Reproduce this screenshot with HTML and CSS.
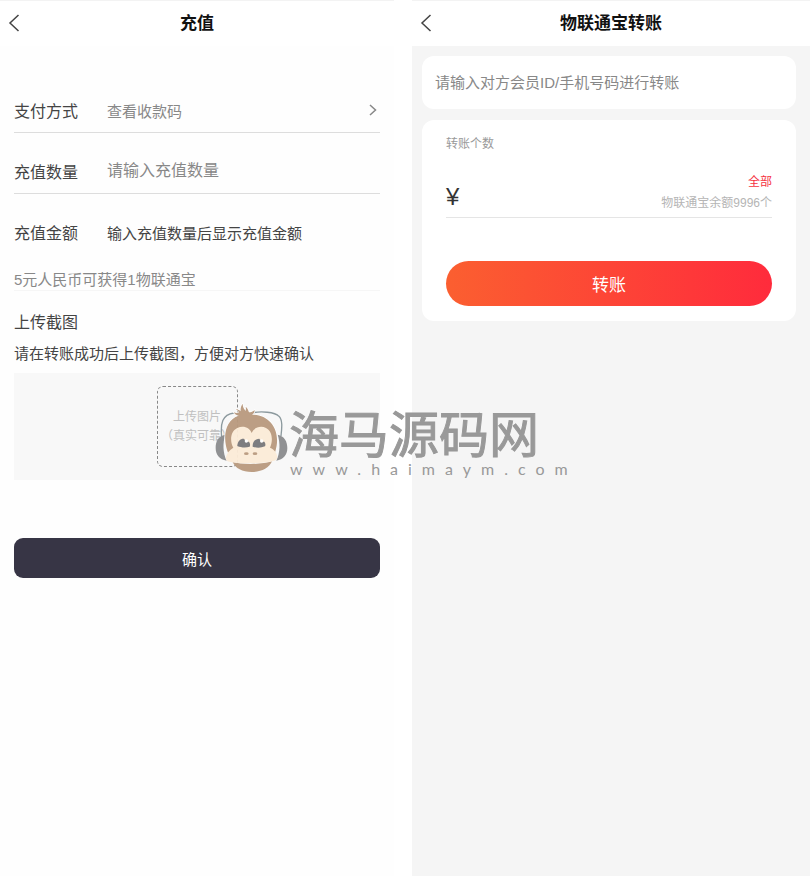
FILE: index.html
```html
<!DOCTYPE html>
<html lang="zh-CN">
<head>
<meta charset="utf-8">
<meta name="viewport" content="width=device-width, initial-scale=1">
<title>充值 / 物联通宝转账</title>
<link rel="stylesheet" href="styles.css">
</head>
<body>
<div class="screens">
  <section class="screen">
    <header class="bar">
      <button class="back" type="button" aria-label="返回"><svg width="12" height="18" viewBox="0 0 12 18"><path d="M10.500 1 2 9l8.500 8"/></svg></button>
      <h1 class="title">充值</h1>
    </header>
    <form class="recharge">
      <div class="row">
        <span class="label">支付方式</span>
        <a class="link" href="#">查看收款码<svg width="8" height="12" viewBox="0 0 8 12"><path d="M1 1l5.500 5L1 11"/></svg></a>
      </div>
      <div class="row">
        <label class="label" for="count">充值数量</label>
        <input class="field" id="count" type="text" placeholder="请输入充值数量">
      </div>
      <div class="row row-last">
        <span class="label">充值金额</span>
        <span class="value">输入充值数量后显示充值金额</span>
      </div>
      <p class="rate">5元人民币可获得1物联通宝</p>
      <h2 class="subtitle">上传截图</h2>
      <p class="hint">请在转账成功后上传截图，方便对方快速确认</p>
      <div class="upload">
        <button class="drop" type="button">上传图片<br>（真实可靠）</button>
      </div>
      <button class="confirm" type="button">确认</button>
    </form>
  </section>

  <section class="screen screen-gray">
    <header class="bar">
      <button class="back" type="button" aria-label="返回"><svg width="12" height="18" viewBox="0 0 12 18"><path d="M10.500 1 2 9l8.500 8"/></svg></button>
      <h1 class="title">物联通宝转账</h1>
    </header>
    <form class="transfer">
      <div class="card card-target">
        <input class="target" type="text" aria-label="对方会员ID或手机号码" placeholder="请输入对方会员ID/手机号码进行转账">
      </div>
      <div class="card card-amount">
        <label class="caption" for="amount">转账个数</label>
        <div class="amount">
          <span class="yen">¥</span>
          <input class="amount-input" id="amount" type="text">
          <div class="balance">
            <button class="all" type="button">全部</button>
            <span class="rest">物联通宝余额9996个</span>
          </div>
        </div>
        <button class="submit" type="button">转账</button>
      </div>
    </form>
  </section>
</div>

<div class="watermark">
  <svg class="monkey" width="75" height="71" viewBox="42 36 225 213" aria-hidden="true">
    <path class="band" d="M65 142C61 100 66 74 102 69M158 68C182 64 224 65 237 79C248 90 246 112 243 138"/>
    <path class="muff" d="M76 134C54 138 47 154 47 174C47 194 59 209 80 212C68 188 68 158 76 134Z"/>
    <path class="muff" d="M233 134C253 138 262 154 262 174C262 194 250 209 229 212C241 188 241 158 233 134Z"/>
    <path class="fur rim" d="M84 188C66 140 76 90 116 77C109 76 104 72 101 67C109 71 114 69 117 67C114 62 110 59 107 57C114 58 119 61 122 64C121 56 123 48 128 41C128 51 132 57 137 63C138 57 138 54 137 50C143 55 145 61 147 67C153 67 159 65 164 60C164 68 160 72 156 74C212 74 246 124 225 188Z"/>
    <path class="fur" d="M98 216C124 224 187 224 216 214C207 235 184 246 155 246C127 246 106 235 98 216Z"/>
    <path class="skin" d="M100 173C91 160 88 125 112 114C132 105 150 115 155 129C160 115 180 105 198 114C220 125 218 158 210 173C224 179 232 190 232 202C231 207 228 211 223 212C188 222 123 222 88 215C79 213 76 207 78 201C80 190 88 180 100 173Z"/>
    <path class="eye" d="M112 168C112 153 122 145 132 146C134 151 141 157 147 155C151 160 151 166 149 170C138 174 123 173 112 168ZM158 170C157 156 166 146 178 146C180 151 187 157 193 155C197 161 197 165 195 169C183 174 169 174 158 170Z"/>
    <circle class="shine" cx="139" cy="153" r="5"/>
    <circle class="shine" cx="185" cy="153" r="5"/>
    <ellipse class="fur" cx="139" cy="191" rx="7" ry="4"/>
    <ellipse class="fur" cx="165" cy="191" rx="7" ry="4"/>
  </svg>
  <div class="brand">
    <div class="brand-name">海马源码网</div>
    <div class="brand-url">www.haimaym.com</div>
  </div>
</div>
</body>
</html>
```
FILE: styles.css
```css
* { box-sizing: border-box; }

body {
  margin: 0;
  background: #fff;
  color: #444;
  font-family: "Liberation Sans", "Noto Sans CJK SC", sans-serif;
  font-size: 15px;
}

h1, h2, p { margin: 0; font-weight: 400; }

button, input {
  margin: 0;
  padding: 0;
  border: 0;
  background: none;
  color: inherit;
  font: inherit;
}

button { cursor: pointer; }
input { min-width: 0; outline: 0; }
input::placeholder { color: #888; opacity: 1; }

svg path { fill: none; stroke: #444; stroke-width: 1.5; }

.screens {
  display: grid;
  grid-template-columns: minmax(0, 394fr) minmax(0, 398fr);
  gap: 18px;
  min-height: 100vh;
  padding-right: 2px;
}

.screen { background: #fefefe; }
.screen-gray { background: #f5f5f5; }

.bar {
  display: grid;
  grid-template-columns: 28px 1fr 28px;
  align-items: center;
  height: 46px;
  border-top: 1px solid #f3f3f3;
  background: #fff;
}

.back {
  display: flex;
  align-items: center;
  height: 44px;
  padding: 0 0 2px 8px;
}

.title {
  color: #111;
  font-size: 17px;
  font-weight: 700;
  line-height: 24px;
  text-align: center;
}

/* Recharge */
.recharge { padding: 26px 14px 0; }

.row {
  display: flex;
  align-items: center;
  height: 45px;
  margin-top: 16px;
  border-bottom: 1px solid #ddd;
}
.row-last { border-bottom-color: transparent; }

.label { flex: 0 0 93px; font-size: 16px; }
.field { flex: 1; font-size: 16px; }

.link {
  display: flex;
  flex: 1;
  align-items: center;
  justify-content: space-between;
  padding-right: 3px;
  color: #888;
  text-decoration: none;
}
.link path { stroke: #888; }

.rate {
  margin-top: 15px;
  border-bottom: 1px solid #f6f6f6;
  color: #888;
  line-height: 20px;
}

.subtitle { margin-top: 20px; font-size: 16px; line-height: 24px; }
.hint { margin-top: 8px; line-height: 22px; }

.upload {
  display: flex;
  justify-content: center;
  margin-top: 8px;
  padding: 13px;
  background: #f8f8f8;
}

.drop {
  width: 81px;
  height: 81px;
  border: 1px dashed #888;
  border-radius: 6px;
  color: #c0c0c0;
  font-size: 12px;
  line-height: 19px;
  white-space: nowrap;
}

.confirm {
  display: block;
  width: 100%;
  height: 40px;
  margin-top: 58px;
  border-radius: 9px;
  background: #373545;
  color: #fff;
}

/* Transfer */
.transfer {
  display: grid;
  grid-template-columns: minmax(0, 1fr);
  gap: 11px;
  padding: 10px 14px 0 10px;
}

.card { border-radius: 12px; background: #fff; }
.card-target { display: flex; height: 53px; padding: 0 13px; }
.target { flex: 1; }
.card-amount { padding: 14px 24px 15px; }

.caption {
  display: block;
  color: #999;
  font-size: 12px;
  line-height: 20px;
}

.amount {
  display: flex;
  align-items: center;
  margin-top: 18px;
  padding-bottom: 3px;
  border-bottom: 1px solid #e5e5e5;
}

.yen { padding-top: 8px; color: #333; font-size: 24px; line-height: 34px; }
.amount-input { flex: 1; height: 42px; font-size: 24px; }

.balance {
  display: flex;
  flex-direction: column;
  align-items: flex-end;
  font-size: 12px;
  line-height: 21px;
}
.all { color: #f5333f; }
.rest { color: #b5b5b5; }

.submit {
  display: block;
  width: 100%;
  height: 45px;
  margin-top: 43px;
  border-radius: 23px;
  background: linear-gradient(90deg, #fb5f30, #ff2b3c);
  color: #fff;
  font-size: 17px;
}

/* Watermark laid over both screens */
.watermark {
  position: absolute;
  top: 402px;
  left: 214px;
  display: flex;
  color: #999;
  pointer-events: none;
}

.monkey { opacity: 0.95; }
.monkey .band { stroke: #87959a; stroke-width: 4; }
.monkey .muff { fill: #8b8c8e; stroke: none; }
.monkey .fur { fill: #b99a7e; stroke: none; }
.monkey .rim { stroke: #fff; stroke-width: 4; paint-order: stroke; }
.monkey .skin { fill: #fcecd8; stroke: none; }
.monkey .eye { fill: #77777a; stroke: none; }
.monkey .shine { fill: #fff; }

.brand-name {
  font-family: "Noto Sans CJK SC", sans-serif;
  font-size: 50px;
  line-height: 50px;
  padding-top: 4px;
  -webkit-text-stroke: 1px #999;
}

.brand-url {
  margin-top: 6px;
  padding-left: 1px;
  font-family: Lato, sans-serif;
  font-size: 16px;
  letter-spacing: 10px;
  line-height: 14px;
}
```
